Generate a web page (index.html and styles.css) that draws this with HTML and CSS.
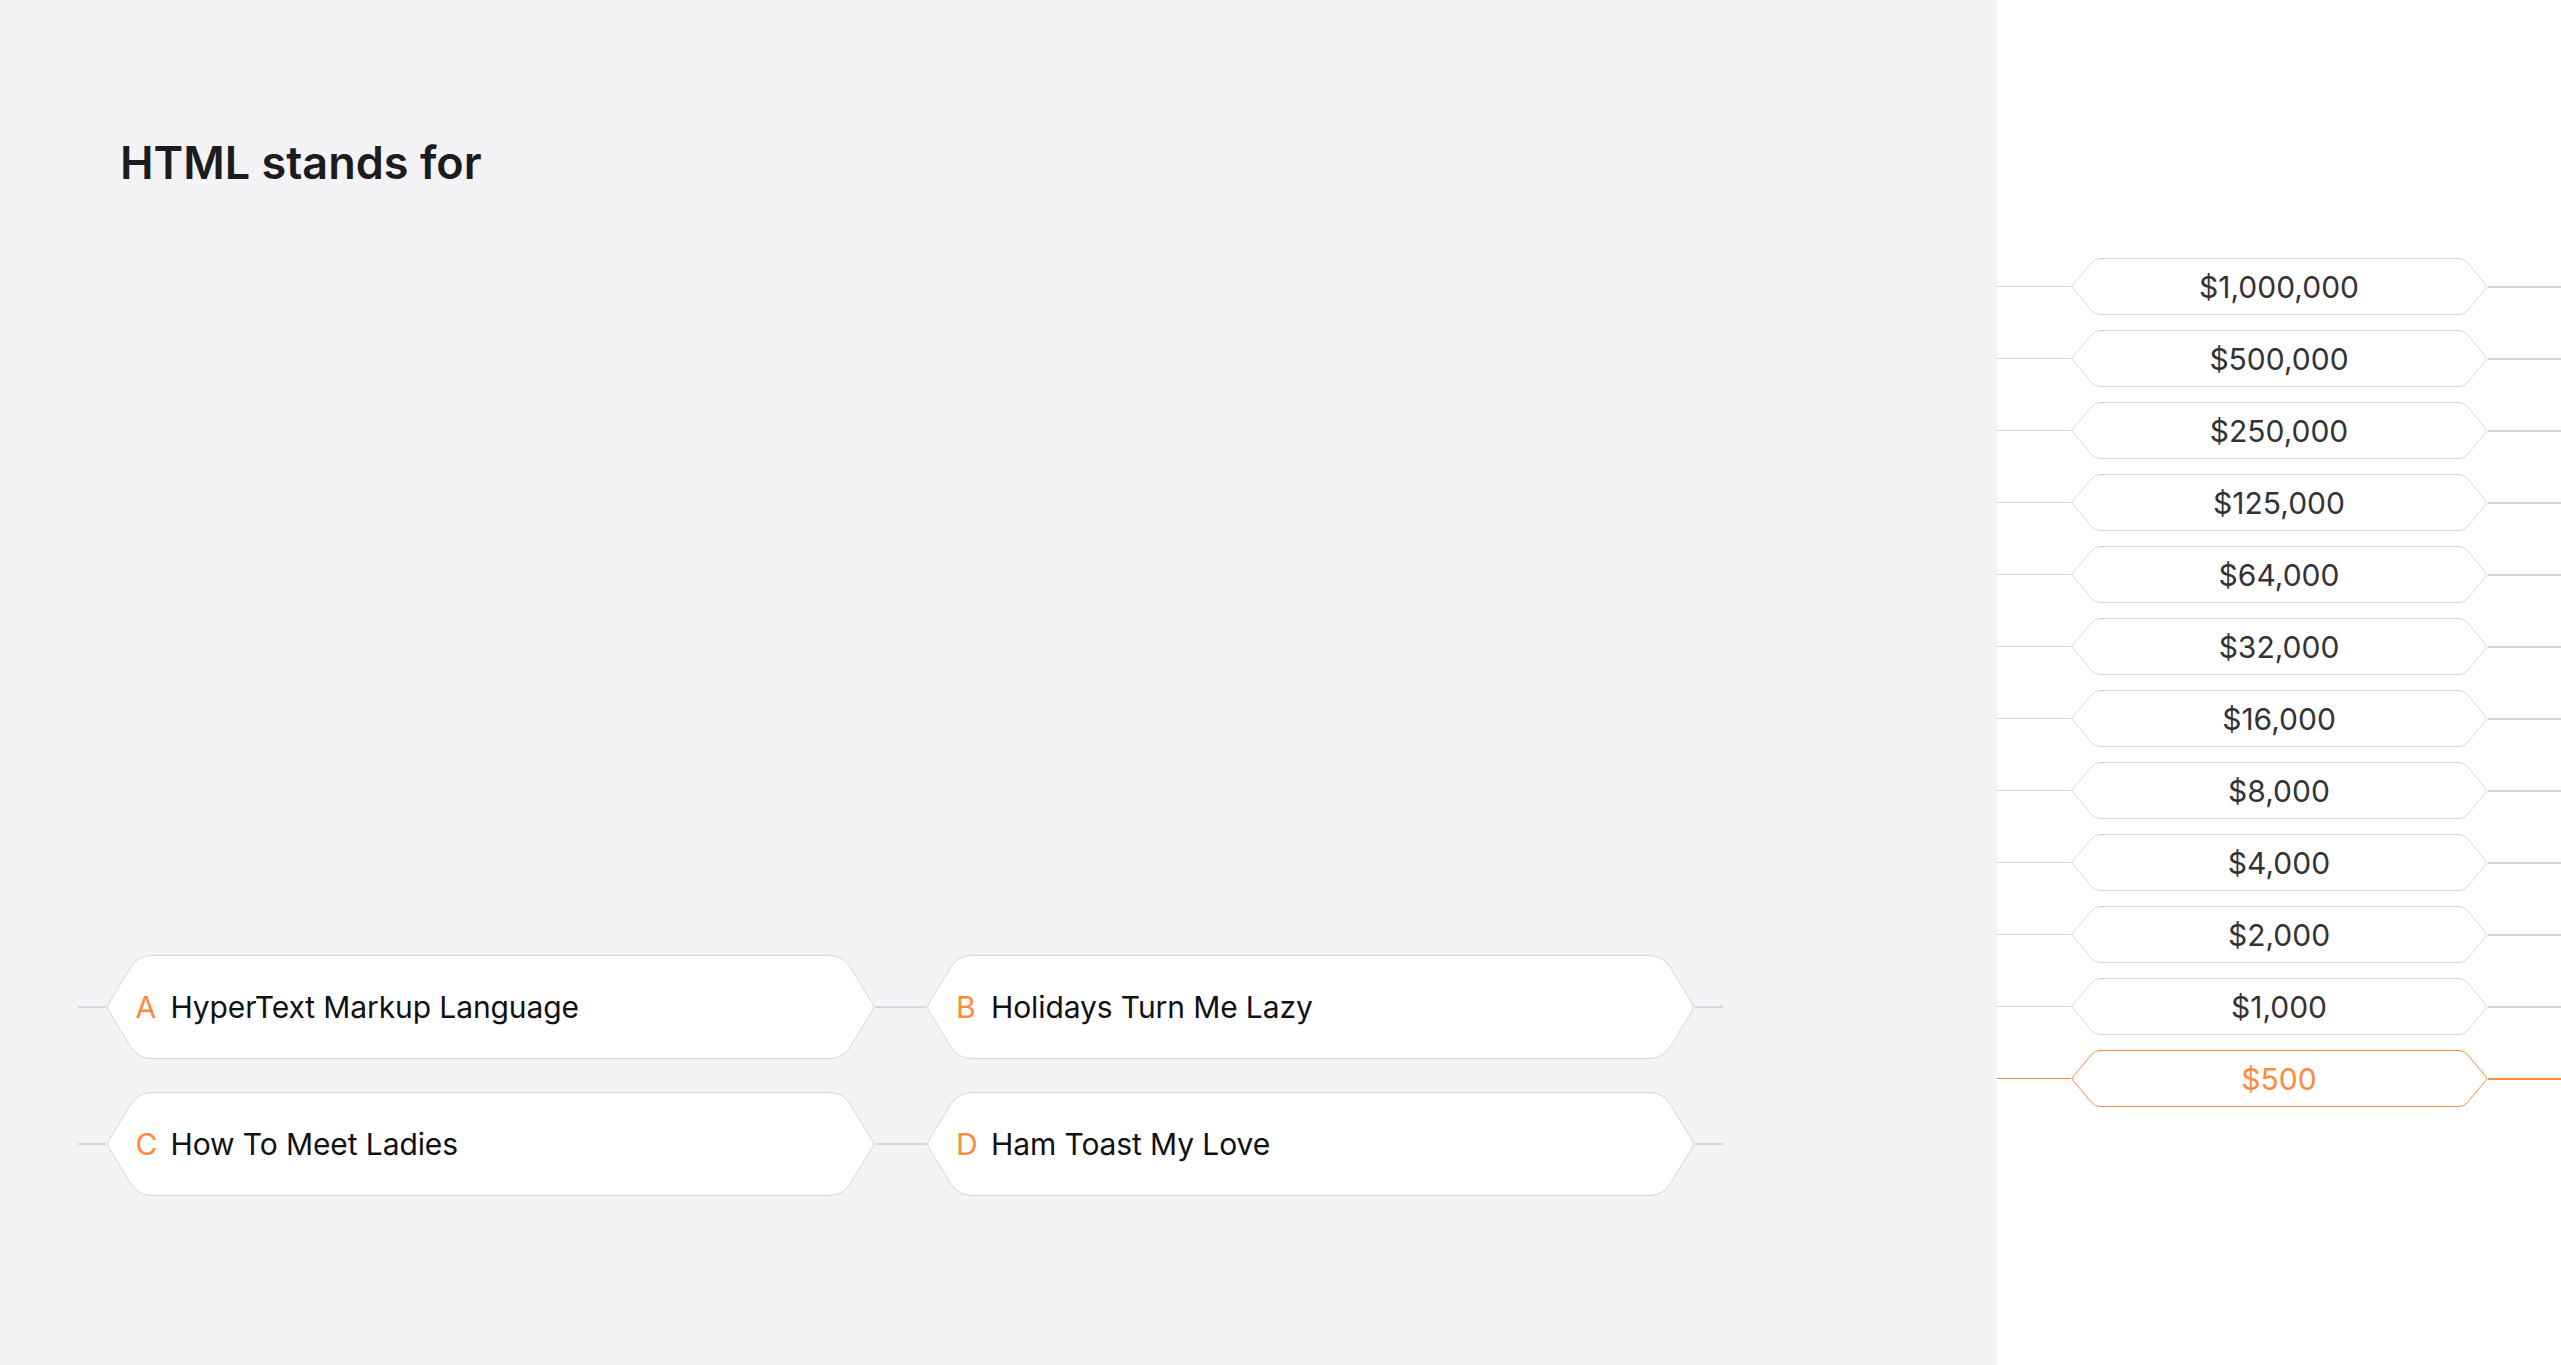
FILE: index.html
```html
<!DOCTYPE html>
<html lang="en">
<head>
<meta charset="utf-8">
<title>HTML stands for</title>
<link rel="stylesheet" href="styles.css">
</head>
<body>
<div class="app">
  <main class="main">
    <h1 class="question">HTML stands for</h1>
    <div class="answers">
      <div class="answer answer-left">
        <span class="line"></span>
        <div class="hex">
          <svg class="hex-bg" viewBox="0 0 769 104" preserveAspectRatio="none"><path d="M46,0.5 H723 Q737,0.5 744.34,12.43 L766.4,48.6 Q768.5,52 766.4,55.4 L744.34,91.57 Q737,103.5 723,103.5 H46 Q32,103.5 24.66,91.57 L2.6,55.4 Q0.5,52 2.6,48.6 L24.66,12.43 Q32,0.5 46,0.5 Z"/></svg>
          <span class="letter">A</span><span class="text">HyperText Markup Language</span>
        </div>
        <span class="line"></span>
      </div>
      <div class="answer answer-right">
        <span class="line"></span>
        <div class="hex">
          <svg class="hex-bg" viewBox="0 0 769 104" preserveAspectRatio="none"><path d="M46,0.5 H723 Q737,0.5 744.34,12.43 L766.4,48.6 Q768.5,52 766.4,55.4 L744.34,91.57 Q737,103.5 723,103.5 H46 Q32,103.5 24.66,91.57 L2.6,55.4 Q0.5,52 2.6,48.6 L24.66,12.43 Q32,0.5 46,0.5 Z"/></svg>
          <span class="letter">B</span><span class="text">Holidays Turn Me Lazy</span>
        </div>
        <span class="line"></span>
      </div>
      <div class="answer answer-left">
        <span class="line"></span>
        <div class="hex">
          <svg class="hex-bg" viewBox="0 0 769 104" preserveAspectRatio="none"><path d="M46,0.5 H723 Q737,0.5 744.34,12.43 L766.4,48.6 Q768.5,52 766.4,55.4 L744.34,91.57 Q737,103.5 723,103.5 H46 Q32,103.5 24.66,91.57 L2.6,55.4 Q0.5,52 2.6,48.6 L24.66,12.43 Q32,0.5 46,0.5 Z"/></svg>
          <span class="letter">C</span><span class="text">How To Meet Ladies</span>
        </div>
        <span class="line"></span>
      </div>
      <div class="answer answer-right">
        <span class="line"></span>
        <div class="hex">
          <svg class="hex-bg" viewBox="0 0 769 104" preserveAspectRatio="none"><path d="M46,0.5 H723 Q737,0.5 744.34,12.43 L766.4,48.6 Q768.5,52 766.4,55.4 L744.34,91.57 Q737,103.5 723,103.5 H46 Q32,103.5 24.66,91.57 L2.6,55.4 Q0.5,52 2.6,48.6 L24.66,12.43 Q32,0.5 46,0.5 Z"/></svg>
          <span class="letter">D</span><span class="text">Ham Toast My Love</span>
        </div>
        <span class="line"></span>
      </div>
    </div>
  </main>
  <aside class="ladder">
    <div class="rung"><span class="rline rline-l"></span><div class="prize"><svg class="prize-bg" viewBox="0 0 417 57" preserveAspectRatio="none"><path d="M29,0.5 H388 Q393,0.5 396.2,4.3 L414.57,26.2 Q416.5,28.5 414.57,30.8 L396.2,52.7 Q393,56.5 388,56.5 H29 Q24,56.5 20.8,52.7 L2.43,30.8 Q0.5,28.5 2.43,26.2 L20.8,4.3 Q24,0.5 29,0.5 Z"/></svg><span class="amount">$1,000,000</span></div><span class="rline rline-r"></span></div>
    <div class="rung"><span class="rline rline-l"></span><div class="prize"><svg class="prize-bg" viewBox="0 0 417 57" preserveAspectRatio="none"><path d="M29,0.5 H388 Q393,0.5 396.2,4.3 L414.57,26.2 Q416.5,28.5 414.57,30.8 L396.2,52.7 Q393,56.5 388,56.5 H29 Q24,56.5 20.8,52.7 L2.43,30.8 Q0.5,28.5 2.43,26.2 L20.8,4.3 Q24,0.5 29,0.5 Z"/></svg><span class="amount">$500,000</span></div><span class="rline rline-r"></span></div>
    <div class="rung"><span class="rline rline-l"></span><div class="prize"><svg class="prize-bg" viewBox="0 0 417 57" preserveAspectRatio="none"><path d="M29,0.5 H388 Q393,0.5 396.2,4.3 L414.57,26.2 Q416.5,28.5 414.57,30.8 L396.2,52.7 Q393,56.5 388,56.5 H29 Q24,56.5 20.8,52.7 L2.43,30.8 Q0.5,28.5 2.43,26.2 L20.8,4.3 Q24,0.5 29,0.5 Z"/></svg><span class="amount">$250,000</span></div><span class="rline rline-r"></span></div>
    <div class="rung"><span class="rline rline-l"></span><div class="prize"><svg class="prize-bg" viewBox="0 0 417 57" preserveAspectRatio="none"><path d="M29,0.5 H388 Q393,0.5 396.2,4.3 L414.57,26.2 Q416.5,28.5 414.57,30.8 L396.2,52.7 Q393,56.5 388,56.5 H29 Q24,56.5 20.8,52.7 L2.43,30.8 Q0.5,28.5 2.43,26.2 L20.8,4.3 Q24,0.5 29,0.5 Z"/></svg><span class="amount">$125,000</span></div><span class="rline rline-r"></span></div>
    <div class="rung"><span class="rline rline-l"></span><div class="prize"><svg class="prize-bg" viewBox="0 0 417 57" preserveAspectRatio="none"><path d="M29,0.5 H388 Q393,0.5 396.2,4.3 L414.57,26.2 Q416.5,28.5 414.57,30.8 L396.2,52.7 Q393,56.5 388,56.5 H29 Q24,56.5 20.8,52.7 L2.43,30.8 Q0.5,28.5 2.43,26.2 L20.8,4.3 Q24,0.5 29,0.5 Z"/></svg><span class="amount">$64,000</span></div><span class="rline rline-r"></span></div>
    <div class="rung"><span class="rline rline-l"></span><div class="prize"><svg class="prize-bg" viewBox="0 0 417 57" preserveAspectRatio="none"><path d="M29,0.5 H388 Q393,0.5 396.2,4.3 L414.57,26.2 Q416.5,28.5 414.57,30.8 L396.2,52.7 Q393,56.5 388,56.5 H29 Q24,56.5 20.8,52.7 L2.43,30.8 Q0.5,28.5 2.43,26.2 L20.8,4.3 Q24,0.5 29,0.5 Z"/></svg><span class="amount">$32,000</span></div><span class="rline rline-r"></span></div>
    <div class="rung"><span class="rline rline-l"></span><div class="prize"><svg class="prize-bg" viewBox="0 0 417 57" preserveAspectRatio="none"><path d="M29,0.5 H388 Q393,0.5 396.2,4.3 L414.57,26.2 Q416.5,28.5 414.57,30.8 L396.2,52.7 Q393,56.5 388,56.5 H29 Q24,56.5 20.8,52.7 L2.43,30.8 Q0.5,28.5 2.43,26.2 L20.8,4.3 Q24,0.5 29,0.5 Z"/></svg><span class="amount">$16,000</span></div><span class="rline rline-r"></span></div>
    <div class="rung"><span class="rline rline-l"></span><div class="prize"><svg class="prize-bg" viewBox="0 0 417 57" preserveAspectRatio="none"><path d="M29,0.5 H388 Q393,0.5 396.2,4.3 L414.57,26.2 Q416.5,28.5 414.57,30.8 L396.2,52.7 Q393,56.5 388,56.5 H29 Q24,56.5 20.8,52.7 L2.43,30.8 Q0.5,28.5 2.43,26.2 L20.8,4.3 Q24,0.5 29,0.5 Z"/></svg><span class="amount">$8,000</span></div><span class="rline rline-r"></span></div>
    <div class="rung"><span class="rline rline-l"></span><div class="prize"><svg class="prize-bg" viewBox="0 0 417 57" preserveAspectRatio="none"><path d="M29,0.5 H388 Q393,0.5 396.2,4.3 L414.57,26.2 Q416.5,28.5 414.57,30.8 L396.2,52.7 Q393,56.5 388,56.5 H29 Q24,56.5 20.8,52.7 L2.43,30.8 Q0.5,28.5 2.43,26.2 L20.8,4.3 Q24,0.5 29,0.5 Z"/></svg><span class="amount">$4,000</span></div><span class="rline rline-r"></span></div>
    <div class="rung"><span class="rline rline-l"></span><div class="prize"><svg class="prize-bg" viewBox="0 0 417 57" preserveAspectRatio="none"><path d="M29,0.5 H388 Q393,0.5 396.2,4.3 L414.57,26.2 Q416.5,28.5 414.57,30.8 L396.2,52.7 Q393,56.5 388,56.5 H29 Q24,56.5 20.8,52.7 L2.43,30.8 Q0.5,28.5 2.43,26.2 L20.8,4.3 Q24,0.5 29,0.5 Z"/></svg><span class="amount">$2,000</span></div><span class="rline rline-r"></span></div>
    <div class="rung"><span class="rline rline-l"></span><div class="prize"><svg class="prize-bg" viewBox="0 0 417 57" preserveAspectRatio="none"><path d="M29,0.5 H388 Q393,0.5 396.2,4.3 L414.57,26.2 Q416.5,28.5 414.57,30.8 L396.2,52.7 Q393,56.5 388,56.5 H29 Q24,56.5 20.8,52.7 L2.43,30.8 Q0.5,28.5 2.43,26.2 L20.8,4.3 Q24,0.5 29,0.5 Z"/></svg><span class="amount">$1,000</span></div><span class="rline rline-r"></span></div>
    <div class="rung rung-current"><span class="rline rline-l"></span><div class="prize"><svg class="prize-bg" viewBox="0 0 417 57" preserveAspectRatio="none"><path d="M29,0.5 H388 Q393,0.5 396.2,4.3 L414.57,26.2 Q416.5,28.5 414.57,30.8 L396.2,52.7 Q393,56.5 388,56.5 H29 Q24,56.5 20.8,52.7 L2.43,30.8 Q0.5,28.5 2.43,26.2 L20.8,4.3 Q24,0.5 29,0.5 Z"/></svg><span class="amount">$500</span></div><span class="rline rline-r"></span></div>
  </aside>
</div>
</body>
</html>
```

FILE: styles.css
```css
* { box-sizing: border-box; }

html, body {
  margin: 0;
  padding: 0;
  height: 100%;
}

body {
  font-family: Inter, "Noto Sans", "Liberation Sans", sans-serif;
  color: #18181b;
  background: #ffffff;
}

.app {
  display: flex;
  height: 100vh;
}

.main {
  width: 1997px;
  flex: none;
  background: #f4f4f6;
  display: flex;
  flex-direction: column;
  padding: 140px 0 169px 0;
}

.question {
  margin: 0 0 0 120px;
  font-size: 45px;
  line-height: 1;
  font-weight: 600;
  color: #1c1c20;
  letter-spacing: 0;
}

.answers {
  margin-top: auto;
  margin-left: 78px;
  display: grid;
  grid-template-columns: 824px 821px;
  row-gap: 33px;
}

.answer {
  display: flex;
  align-items: center;
  height: 104px;
}

.line {
  flex: 1;
  height: 2px;
  background: #d6d6dc;
}

.answer-right .line:first-child {
  flex: 0 0 24px;
}

.hex {
  position: relative;
  width: 769px;
  height: 104px;
  flex: none;
  display: flex;
  align-items: center;
  padding-left: 30px;
}

.hex-bg {
  position: absolute;
  left: 0;
  top: 0;
  width: 100%;
  height: 100%;
}

.hex-bg path {
  fill: #ffffff;
  stroke: #d6d6dc;
  stroke-width: 1;
}

.letter,
.text {
  position: relative;
  font-size: 30px;
  line-height: 1;
}

.letter {
  color: #ff8a3d;
  width: 35px;
}

.text {
  color: #111113;
  letter-spacing: -0.1px;
}

.ladder {
  flex: 1;
  background: #ffffff;
  display: flex;
  flex-direction: column;
  gap: 15px;
  padding-top: 258px;
}

.rung {
  display: flex;
  align-items: center;
  height: 57px;
}

.rline {
  flex: 1;
  background: #d6d6dc;
}

.rline-l { height: 1px; }
.rline-r { height: 2px; }

.prize {
  position: relative;
  width: 417px;
  height: 57px;
  flex: none;
  display: flex;
  align-items: center;
  justify-content: center;
}

.prize-bg {
  position: absolute;
  left: 0;
  top: 0;
  width: 100%;
  height: 100%;
}

.prize-bg path {
  fill: #ffffff;
  stroke: #d6d6dc;
  stroke-width: 1;
}

.amount {
  position: relative;
  font-size: 30px;
  line-height: 1;
  color: #333336;
}

.rung-current .rline { background: #ff8a3d; }
.rung-current .prize-bg path { stroke: #ff8a3d; }
.rung-current .amount { color: #ff8a3d; }
```
